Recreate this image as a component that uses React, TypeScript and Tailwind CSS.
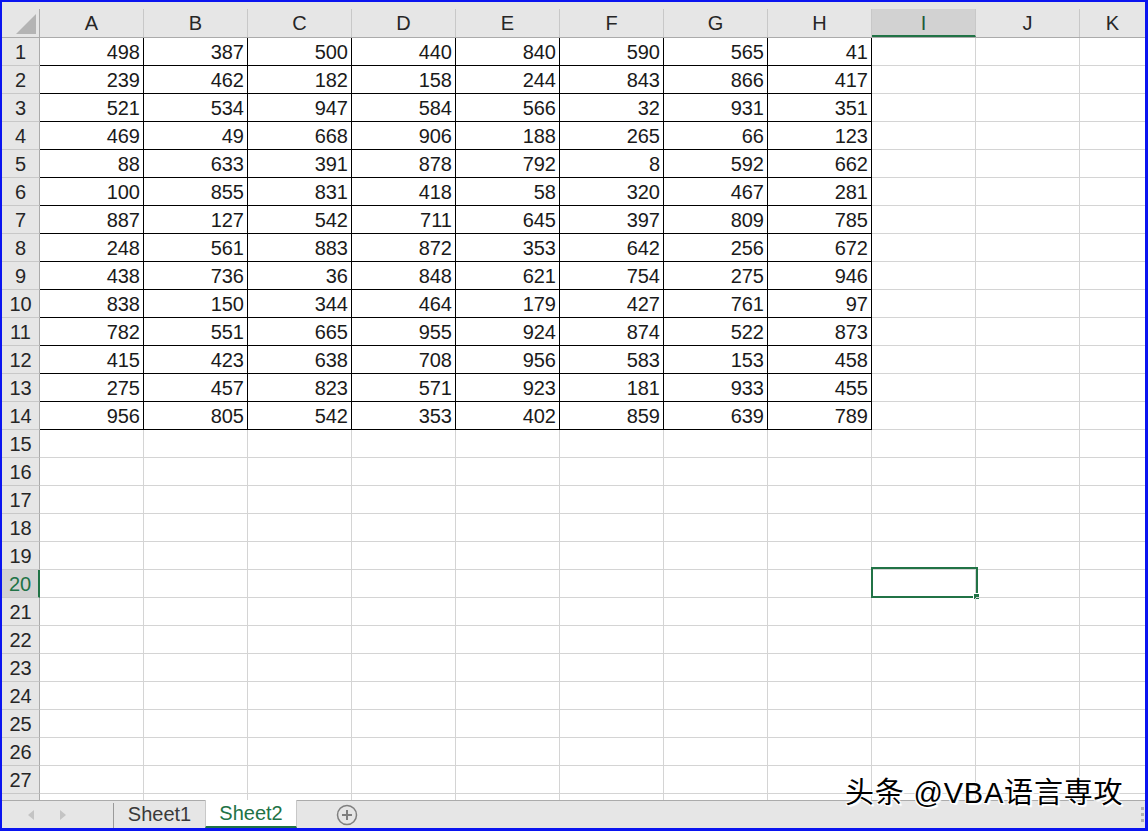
import React from 'react';

const COLS = ['A', 'B', 'C', 'D', 'E', 'F', 'G', 'H', 'I', 'J', 'K'];

const DATA: number[][] = [
  [498, 387, 500, 440, 840, 590, 565, 41],
  [239, 462, 182, 158, 244, 843, 866, 417],
  [521, 534, 947, 584, 566, 32, 931, 351],
  [469, 49, 668, 906, 188, 265, 66, 123],
  [88, 633, 391, 878, 792, 8, 592, 662],
  [100, 855, 831, 418, 58, 320, 467, 281],
  [887, 127, 542, 711, 645, 397, 809, 785],
  [248, 561, 883, 872, 353, 642, 256, 672],
  [438, 736, 36, 848, 621, 754, 275, 946],
  [838, 150, 344, 464, 179, 427, 761, 97],
  [782, 551, 665, 955, 924, 874, 522, 873],
  [415, 423, 638, 708, 956, 583, 153, 458],
  [275, 457, 823, 571, 923, 181, 933, 455],
  [956, 805, 542, 353, 402, 859, 639, 789],
];

const ROW_COUNT = 28;
const VISIBLE_ROWS = 27; // row 28 is only a sliver under the tab bar
const SEL_ROW = 20;
const SEL_COL = 8; // I

const Cell: React.FC<{ r: number; c: number }> = ({ r, c }) => {
  const inData = r <= DATA.length && c < 8;
  const value = inData ? DATA[r - 1][c] : null;
  const last = c === COLS.length - 1;
  const selected = r === SEL_ROW && c === SEL_COL;
  return (
    <div
      className={`relative h-full shrink-0 flex items-center justify-end pr-[3px] border-b ${
        last ? 'flex-1' : 'w-[104px] border-r'
      } ${inData ? 'border-black' : 'border-[#d4d4d4]'}`}
    >
      {value !== null && <span className="leading-none">{value}</span>}
      {selected && (
        <div className="absolute top-[-3px] left-[-1px] w-[107px] h-[31px] border-2 border-[#217346]">
          <div className="absolute right-[-4px] bottom-[-4px] w-[7px] h-[7px] bg-[#217346] border border-white" />
        </div>
      )}
    </div>
  );
};

const App: React.FC = () => {
  return (
    <div
      className="w-[1148px] h-[831px] overflow-hidden bg-white border-t-2 border-l-2 border-r-[3px] border-b-[3px] border-[#0a14f0] flex flex-col relative text-[20px] text-[#1a1a1a]"
      style={{ fontFamily: '"Liberation Sans", Arial, sans-serif' }}
    >
      {/* strip above headers */}
      <div className="h-[7px] bg-[#e6e6e6] shrink-0" />

      {/* column headers */}
      <div className="h-[29px] shrink-0 flex bg-[#e6e6e6] border-b border-[#ababab]">
        <div className="w-[38px] shrink-0 border-r border-[#ababab] relative">
          <svg className="absolute right-[3px] bottom-[3px]" width="20" height="20" viewBox="0 0 20 20">
            <polygon points="20,0 20,20 0,20" fill="#b4b4b4" />
          </svg>
        </div>
        {COLS.map((col, i) => {
          const sel = i === SEL_COL;
          const last = i === COLS.length - 1;
          return (
            <div
              key={col}
              className={`h-full flex items-center justify-center ${last ? 'flex-1' : 'w-[104px] shrink-0 border-r border-[#c8c8c8]'} ${
                sel ? 'bg-[#d2d2d2] text-[#1e5b38] border-b-2 border-b-[#217346] pt-[2px]' : 'text-[#262626]'
              }`}
            >
              {col}
            </div>
          );
        })}
      </div>

      {/* rows */}
      <div className="flex-1 overflow-hidden">
        {Array.from({ length: ROW_COUNT }, (_, i) => i + 1).map(r => {
          const sel = r === SEL_ROW;
          return (
            <div key={r} className="h-[28px] flex">
              <div
                className={`w-[38px] shrink-0 h-full flex items-center justify-center border-b border-[#c8c8c8] ${
                  sel
                    ? 'bg-[#d2d2d2] text-[#217346] border-r-2 border-r-[#217346]'
                    : 'bg-[#e6e6e6] text-[#262626] border-r border-r-[#ababab]'
                }`}
              >
                {r <= VISIBLE_ROWS ? r : ''}
              </div>
              {COLS.map((_, c) => (
                <Cell key={c} r={r} c={c} />
              ))}
            </div>
          );
        })}
      </div>

      {/* sheet tabs */}
      <div className="h-[28px] shrink-0 bg-[#e6e6e6] border-t border-[#ababab] flex items-stretch text-[20px]">
        <div className="w-[111px] flex items-center shrink-0">
          <svg className="ml-[25px]" width="8" height="12" viewBox="0 0 8 12">
            <polygon points="7,1 1,6 7,11" fill="#c4c4c4" />
          </svg>
          <svg className="ml-[24px]" width="8" height="12" viewBox="0 0 8 12">
            <polygon points="1,1 7,6 1,11" fill="#c4c4c4" />
          </svg>
        </div>
        <div className="w-[92px] shrink-0 border-l border-[#9a9a9a] mt-[2px] pb-[3px] flex items-center justify-center text-[#3a3a3a]">
          Sheet1
        </div>
        <div className="w-[92px] shrink-0 bg-white border-x border-[#c8c8c8] border-b-2 border-b-[#217346] -mt-px flex items-center justify-center text-[#217346]">
          Sheet2
        </div>
        <div className="w-[100px] shrink-0 flex items-center justify-center">
          <svg width="22" height="22" viewBox="0 0 22 22">
            <circle cx="11" cy="11" r="9.5" fill="none" stroke="#7f7f7f" strokeWidth="1.5" />
            <path d="M11 6v10M6 11h10" stroke="#7f7f7f" strokeWidth="2" />
          </svg>
        </div>
        <div className="flex-1" />
        <div className="w-[6px] flex flex-col items-center justify-center gap-[3px]">
          <div className="w-[3px] h-[3px] bg-[#b0b0b0]" />
          <div className="w-[3px] h-[3px] bg-[#b0b0b0]" />
          <div className="w-[3px] h-[3px] bg-[#b0b0b0]" />
        </div>
      </div>

      {/* watermark */}
      <div
        className="absolute left-[843px] top-[777px] text-[29px] tracking-[0.8px] leading-none text-black whitespace-nowrap"
        style={{
          fontFamily: '"Liberation Sans", "Noto Sans CJK SC", sans-serif',
          textShadow: '1px 1px 0 #fff, -1px -1px 0 #fff, 1px -1px 0 #fff, -1px 1px 0 #fff, 2px 2px 1px #fff',
        }}
      >
        头条 @VBA语言専攻
      </div>
    </div>
  );
};

export default App;
